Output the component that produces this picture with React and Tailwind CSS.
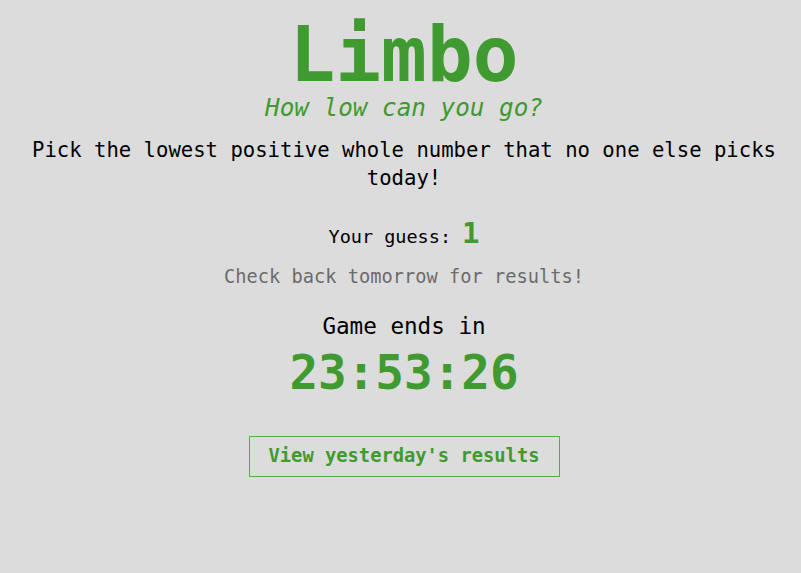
export default function App() {
  return (
    <main
      className="min-h-[573px] bg-[#dcdcdc] flex flex-col items-center text-center text-black pl-[7px]"
      style={{ fontFamily: '"DejaVu Sans Mono", "Liberation Mono", monospace' }}
    >
      <h1 className="text-[76px] leading-[80px] font-bold text-[#3f9a2f] mt-[15px]">Limbo</h1>
      <p className="text-[24.3px] leading-[26px] italic text-[#3f9a2f]">How low can you go?</p>
      <p className="text-[20.6px] leading-[28px] px-6 mt-[15px]">
        Pick the lowest positive whole number that no one else picks today!
      </p>

      <p className="text-[18.5px] leading-[30px] mt-[26px] flex items-baseline gap-[11px]">
        <span>Your guess:</span>
        <span className="text-[29px] font-bold text-[#3f9a2f]">1</span>
      </p>
      <p className="text-[18.7px] leading-[26px] text-[#6b6b6b] mt-[12px]">Check back tomorrow for results!</p>

      <p className="text-[22.6px] leading-[30px] mt-[21px]">Game ends in</p>
      <p className="text-[47.6px] leading-[56px] font-bold text-[#3f9a2f] mt-[4px]">23:53:26</p>

      <div className="mt-[35px] w-[311px] h-[41px] border border-solid border-[color:#5fa552] flex items-center justify-center text-[18.75px] font-bold text-[#3f9a2f]">
        View yesterday's results
      </div>
    </main>
  );
}
